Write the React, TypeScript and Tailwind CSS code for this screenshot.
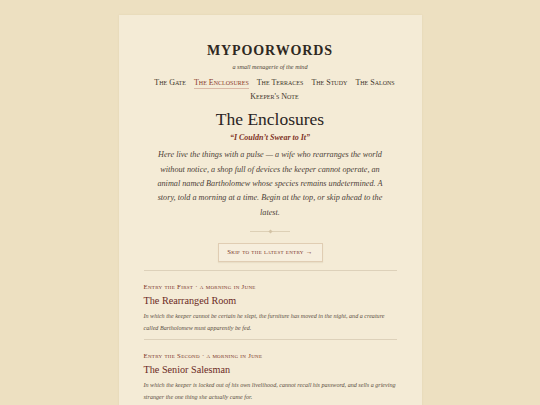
const nav = [
  { label: "The Gate", active: false },
  { label: "The Enclosures", active: true },
  { label: "The Terraces", active: false },
  { label: "The Study", active: false },
  { label: "The Salons", active: false },
  { label: "Keeper's Note", active: false },
];

const entries = [
  {
    label: "Entry the First · a morning in June",
    title: "The Rearranged Room",
    blurb:
      "In which the keeper cannot be certain he slept, the furniture has moved in the night, and a creature called Bartholomew must apparently be fed.",
  },
  {
    label: "Entry the Second · a morning in June",
    title: "The Senior Salesman",
    blurb:
      "In which the keeper is locked out of his own livelihood, cannot recall his password, and sells a grieving stranger the one thing she actually came for.",
  },
];

export default function App() {
  return (
    <div className="h-screen w-full bg-[#ede0c1] font-['Liberation_Serif',serif] text-[#3a322a] overflow-hidden">
      <div className="mx-auto mt-[15px] w-[303px] bg-[#f4ebd6] px-[25px] pb-10 pt-[29px] shadow-[0_0_2px_rgba(120,90,40,0.08)]">
        <header className="text-center">
          <h1 className="text-[14px] font-bold leading-none tracking-[0.9px] text-[#2e2822]">
            MYPOORWORDS
          </h1>
          <p className="mt-[6px] text-[6.2px] italic leading-none text-[#4a3f35]">
            a small menagerie of the mind
          </p>
          <nav className="mx-auto mt-[7px] flex w-[262px] flex-wrap justify-center gap-x-[8px] gap-y-[2px] text-[8px] leading-[11px] [font-variant:small-caps]">
            {nav.map((n) => (
              <span
                key={n.label}
                className={
                  n.active
                    ? "border-b border-[#d9b9a6] text-[#8a3b2b]"
                    : "border-b border-transparent text-[#3d342b]"
                }
              >
                {n.label}
              </span>
            ))}
          </nav>
        </header>

        <section className="mt-[5px] text-center">
          <h2 className="text-[17.5px] leading-[22px] text-[#2a241f]">The Enclosures</h2>
          <p className="mt-[4px] text-[8px] font-bold italic leading-none text-[#7f3326]">
            “I Couldn’t Swear to It”
          </p>
          <p className="mx-auto mt-[6px] w-[228px] text-[8.2px] italic leading-[14.4px] text-[#4d4238]">
            Here live the things with a pulse — a wife who rearranges the world without notice, a shop full of devices the keeper cannot operate, an animal named Bartholomew whose species remains undetermined. A story, told a morning at a time. Begin at the top, or skip ahead to the latest.
          </p>
          <div className="mx-auto mt-[10px] flex w-[40px] items-center">
            <div className="h-px flex-1 bg-[#ddd0b6]" />
            <div className="h-[3px] w-[3px] rotate-45 bg-[#d3c3a5]" />
            <div className="h-px flex-1 bg-[#ddd0b6]" />
          </div>
          <button className="mt-[10px] h-[19px] w-[105px] border border-[#e0cdb3] bg-[#f6eedd] text-[6.8px] leading-none text-[#7a3428] [font-variant:small-caps] tracking-[0.3px] shadow-[0_1px_1px_rgba(120,90,40,0.08)]">
            Skip to the latest entry →
          </button>
        </section>

        <div className="mt-[8px] h-px bg-[#ddd1ba]" />

        {entries.map((e) => (
          <article key={e.title} className="pt-[11px]">
            <p className="text-[6.8px] leading-[10px] text-[#7a3428] [font-variant:small-caps] tracking-[0.3px]">
              {e.label}
            </p>
            <h3 className="mt-[2px] text-[10.2px] leading-[13px] text-[#6b2a1f]">{e.title}</h3>
            <p className="mt-[4px] text-[6.1px] italic leading-[11.5px] text-[#5a4e42]">{e.blurb}</p>
            <div className="mt-[5px] h-px bg-[#ddd1ba]" />
          </article>
        ))}
      </div>
    </div>
  );
}
